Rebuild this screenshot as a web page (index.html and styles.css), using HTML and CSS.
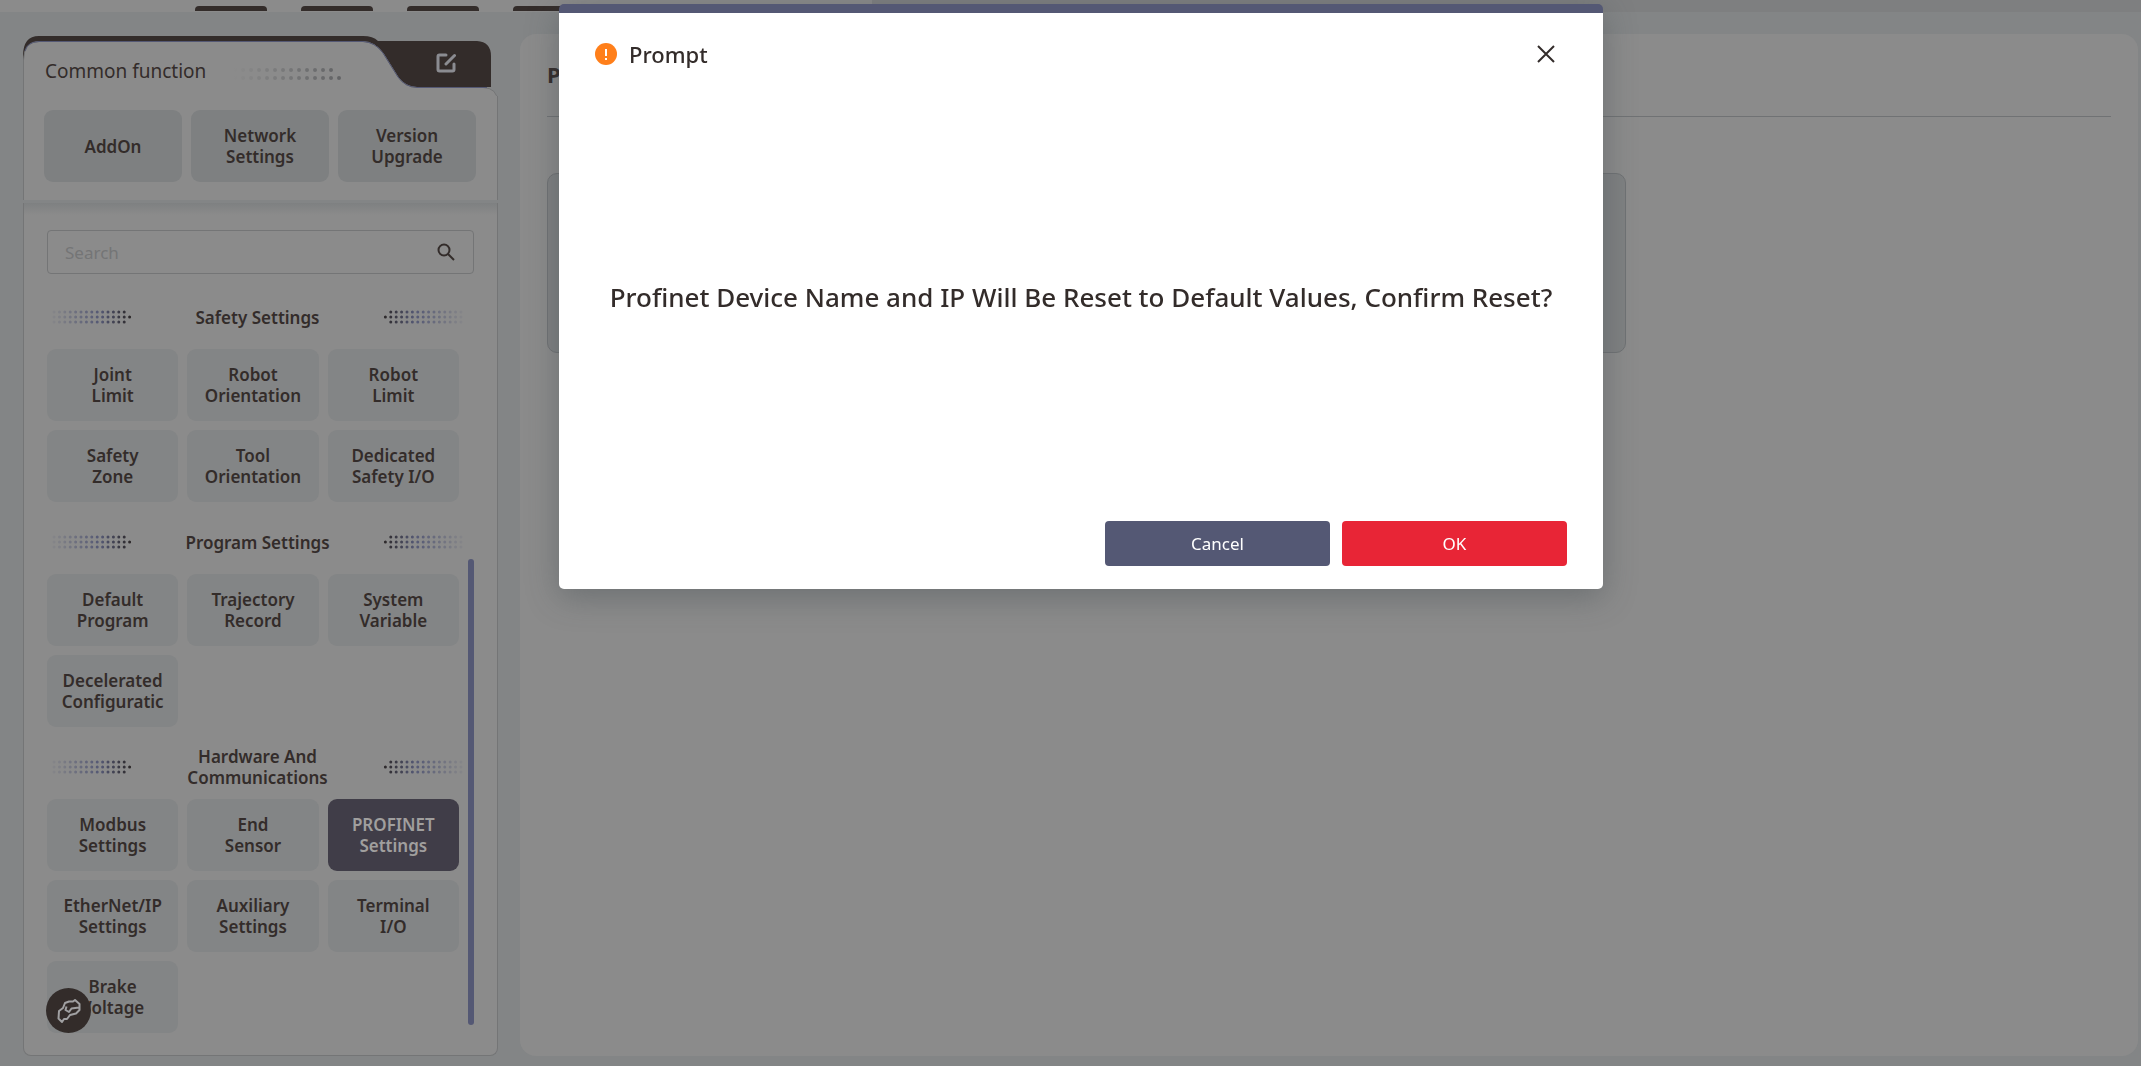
FILE: index.html
```html
<!doctype html>
<html lang="en">
  <head>
    <meta charset="utf-8">
    <meta name="viewport" content="width=device-width, initial-scale=1">
    <title>PROFINET Settings</title>
    <link rel="stylesheet" href="styles.css">
  </head>
  <body>
    <div class="topbar">
      <div class="topbar-tabs"><i></i><i></i><i></i><i></i></div>
      <div class="topbar-rest"></div>
    </div>

    <div class="layout">
      <aside class="sidebar">
        <section class="common">
          <svg class="folder" viewBox="0 0 475 60" aria-hidden="true">
            <path fill="#332c2a" d="M0 20Q0 0 16 0H340Q350 0 355 5H454Q468 6 468 20V51H355L0 26Z"/>
            <path fill="#8b8b8b" stroke="#747576" d="M.5 60V24Q1 5.500 16 5.500H340Q352 6 360 17L375 41Q382 51 394 51.500H460Q474.500 52 474.500 66"/>
            <path fill="none" stroke="#545874" d="M2 15Q4 6 16 5.500H340Q352 6 360 17L375 41Q382 51 394 51.500H464"/>
          </svg>
          <div class="common-head">
            <h2>Common function</h2>
            <svg class="trail" viewBox="0 0 112 14" aria-hidden="true">
              <defs>
                <linearGradient id="fade-grey" gradientUnits="userSpaceOnUse" x1="0" x2="112">
                  <stop offset="0" stop-color="#616264" stop-opacity="0"/>
                  <stop offset="1" stop-color="#616264"/>
                </linearGradient>
              </defs>
              <path d="M2 3H104M2 11H111" stroke="url(#fade-grey)"/>
            </svg>
            <button class="edit" type="button" aria-label="Edit">
              <svg viewBox="0 0 20 20"><path d="M10 2H3.500Q2 2 2 3.500V16.500Q2 18 3.500 18H16.500Q18 18 18 16.500V11M10 11L18.500 2.500"/></svg>
            </button>
          </div>
          <div class="grid common-grid">
            <button type="button">AddOn</button>
            <button type="button">Network<br>Settings</button>
            <button type="button">Version<br>Upgrade</button>
          </div>
        </section>

        <section class="functions">
          <label class="search">
            <input type="text" placeholder="Search" aria-label="Search">
            <svg viewBox="0 0 18 18" aria-hidden="true"><circle cx="7" cy="7" r="5.500"/><path d="M11 11L17 17"/></svg>
          </label>

          <div class="scroller">
            <div class="groups">
              <h3><svg class="dots"><use href="#dots"/></svg><span>Safety Settings</span><svg class="dots flip"><use href="#dots"/></svg></h3>
              <div class="grid">
                <button type="button">Joint<br>Limit</button>
                <button type="button">Robot<br>Orientation</button>
                <button type="button">Robot<br>Limit</button>
                <button type="button">Safety<br>Zone</button>
                <button type="button">Tool<br>Orientation</button>
                <button type="button">Dedicated<br>Safety I/O</button>
              </div>

              <h3><svg class="dots"><use href="#dots"/></svg><span>Program Settings</span><svg class="dots flip"><use href="#dots"/></svg></h3>
              <div class="grid">
                <button type="button">Default<br>Program</button>
                <button type="button">Trajectory<br>Record</button>
                <button type="button">System<br>Variable</button>
                <button type="button">Decelerated<br>Configuratic</button>
              </div>

              <h3><svg class="dots"><use href="#dots"/></svg><span>Hardware And<br>Communications</span><svg class="dots flip"><use href="#dots"/></svg></h3>
              <div class="grid">
                <button type="button">Modbus<br>Settings</button>
                <button type="button">End<br>Sensor</button>
                <button type="button" class="active">PROFINET<br>Settings</button>
                <button type="button">EtherNet/IP<br>Settings</button>
                <button type="button">Auxiliary<br>Settings</button>
                <button type="button">Terminal<br>I/O</button>
                <button type="button">Brake<br>Voltage</button>
              </div>
            </div>
            <div class="track"><div class="thumb"></div></div>
          </div>
        </section>
      </aside>

      <main class="content">
        <h1>P</h1>
        <div class="card"></div>
      </main>
    </div>

    <button class="robot" type="button" aria-label="Robot">
      <svg viewBox="0 0 24 24"><path d="M5 23L1.500 19.500L2 12L6 9L8 4L12 2.500H16L18 1L22.500 5V11L19 14.500L13 16L10 20H7ZM9.500 7.500L8.500 11L12 13L14.500 9.500L22 8.500"/></svg>
    </button>

    <div class="overlay">
      <div class="modal" role="dialog" aria-modal="true" aria-labelledby="modal-title">
        <header>
          <svg class="warn" viewBox="0 0 22 22" aria-hidden="true"><circle cx="11" cy="11" r="11" fill="#ff7f1a"/><path d="M11 6V13M11 15V17" stroke="#fff"/></svg>
          <h2 id="modal-title">Prompt</h2>
          <button class="close" type="button" aria-label="Close">
            <svg viewBox="0 0 18 18"><path d="M1 1L17 17M17 1L1 17"/></svg>
          </button>
        </header>
        <p>Profinet Device Name and IP Will Be Reset to Default Values, Confirm Reset?</p>
        <footer>
          <button type="button">Cancel</button>
          <button type="button" class="ok">OK</button>
        </footer>
      </div>
    </div>

    <!-- dotted arrow, shared by the group titles -->
    <svg class="defs" aria-hidden="true">
      <defs>
        <linearGradient id="fade" gradientUnits="userSpaceOnUse" x1="0" x2="80">
          <stop offset="0" stop-color="#545874" stop-opacity=".1"/>
          <stop offset=".6" stop-color="#545874"/>
          <stop offset="1" stop-color="#2a2626"/>
        </linearGradient>
      </defs>
      <symbol id="dots" viewBox="0 0 80 14">
        <path d="M2 2H73M2 7H79M2 12H73" stroke="url(#fade)" stroke-width="3" stroke-linecap="round" stroke-dasharray="0 5.400" fill="none"/>
      </symbol>
    </svg>
  </body>
</html>
```
FILE: styles.css
```css
* {
  box-sizing: border-box;
}

html, body {
  height: 100%;
}

body {
  margin: 0;
  display: flex;
  flex-direction: column;
  overflow: hidden;
  background: #838586;
  color: #332c2a;
  font-family: "Noto Sans", "Open Sans", sans-serif;
  font-size: 17px;
  line-height: 21px;
}

h1, h2, h3, p {
  margin: 0;
}

button {
  border: 0;
  padding: 0;
  font: inherit;
  color: inherit;
  cursor: pointer;
}

.defs {
  position: absolute;
  width: 0;
  height: 0;
}

/* top bar */
.topbar {
  display: flex;
  flex: none;
  height: 12px;
  background: #8b8b8b;
}

.topbar-tabs {
  display: flex;
  align-items: flex-end;
  gap: 34px;
  padding: 0 287px 1px 195px;
}

.topbar-tabs i {
  width: 72px;
  height: 5px;
  border-radius: 4px 4px 0 0;
  background: #332c2a;
}

.topbar-rest {
  flex: 1;
  background: #7e7f80;
}

.layout {
  flex: 1;
  min-height: 0;
  display: flex;
  gap: 22px;
  padding: 22px 3px 10px 23px;
}

/* sidebar */
.sidebar {
  flex: none;
  width: 475px;
  display: flex;
  flex-direction: column;
  padding-top: 2px;
}

.common {
  position: relative;
  height: 164px;
}

.common::before {
  content: "";
  position: absolute;
  inset: 60px 0 0;
  background: #8b8b8b;
  border: solid #747576;
  border-width: 0 1px;
}

.folder {
  position: absolute;
  top: 0;
  left: 0;
  width: 100%;
}

.common-head {
  position: relative;
  display: flex;
  align-items: center;
  height: 74px;
  padding: 0 42px 4px 22px;
}

.common-head h2 {
  font-size: 19px;
  font-weight: 400;
}

.trail {
  width: 112px;
  height: 14px;
  margin: 6px 0 0 27px;
}

.trail path {
  fill: none;
  stroke-width: 4;
  stroke-linecap: round;
  stroke-dasharray: 0 8;
}

.edit {
  display: flex;
  margin: 0 0 16px auto;
  background: none;
}

.edit svg {
  width: 20px;
  height: 20px;
  fill: none;
  stroke: #8b8c91;
  stroke-width: 3;
  stroke-linecap: round;
}

.grid {
  display: grid;
  grid-template-columns: repeat(3, 1fr);
  gap: 9px;
}

.grid button {
  height: 72px;
  border-radius: 9px;
  background: #838586;
  font-weight: 600;
}

.grid .active {
  background: #403d48;
  color: #a09f9e;
}

.common-grid {
  position: relative;
  padding: 0 22px 0 21px;
}

.common-grid button {
  background: #7e8081;
}

.functions {
  flex: 1;
  min-height: 0;
  display: flex;
  flex-direction: column;
  margin-top: 3px;
  padding: 27px 23px 23px;
  background: linear-gradient(#7e8081, #8b8b8b 12px);
  border: solid #747576;
  border-width: 0 1px 1px;
  border-radius: 0 0 8px 8px;
}

.search {
  display: flex;
  align-items: center;
  height: 44px;
  margin-bottom: 12px;
  padding: 0 18px 0 17px;
  border: 1px solid #747576;
  border-radius: 4px;
}

.search input {
  flex: 1;
  min-width: 0;
  padding: 0;
  border: 0;
  outline: 0;
  background: none;
  font: inherit;
  color: inherit;
}

.search input::placeholder {
  color: #747576;
  opacity: 1;
}

.search svg {
  width: 18px;
  height: 18px;
  fill: none;
  stroke: #332c2a;
  stroke-width: 2;
}

.scroller {
  flex: 1;
  min-height: 0;
  display: flex;
  gap: 9px;
}

.groups {
  flex: 1;
}

.groups h3 {
  display: flex;
  align-items: center;
  justify-content: space-between;
  height: 62px;
  margin: 0 -4px 1px 5px;
  font-size: 17px;
  font-weight: 600;
  text-align: center;
}

.groups .grid + h3 {
  margin-top: 9px;
}

.dots {
  flex: none;
  width: 80px;
  height: 14px;
}

.flip {
  transform: scaleX(-1);
}

.track {
  display: flex;
  flex-direction: column;
  justify-content: flex-end;
  width: 6px;
  padding-bottom: 7px;
}

.thumb {
  height: 63%;
  border-radius: 3px;
  background: #545874;
}

/* page content behind the dialog */
.content {
  flex: 1;
  padding: 0 27px;
  border-radius: 16px;
  background: #8b8b8b;
}

.content h1 {
  height: 83px;
  border-bottom: 1px solid #707274;
  font-size: 22px;
  font-weight: 700;
  line-height: 80px;
}

.card {
  width: 69%;
  height: 180px;
  margin-top: 56px;
  border: 1px solid #707274;
  border-radius: 10px;
  background: #7f8182;
}

.robot {
  position: fixed;
  left: 46px;
  bottom: 33px;
  display: flex;
  align-items: center;
  justify-content: center;
  width: 45px;
  height: 45px;
  border-radius: 50%;
  background: #332c2a;
}

.robot svg {
  width: 24px;
  height: 24px;
  fill: none;
  stroke: #a0a0a2;
  stroke-width: 2;
  stroke-linejoin: round;
}

/* dialog */
.overlay {
  position: fixed;
  inset: 0;
  display: flex;
  align-items: flex-start;
  justify-content: center;
  padding: 4px 0 0 21px;
}

.modal {
  display: flex;
  flex-direction: column;
  width: 1044px;
  height: 585px;
  padding: 0 36px 23px;
  border-top: 9px solid #545874;
  border-radius: 5px;
  background: #fff;
  box-shadow: 0 8px 32px rgba(60, 70, 75, .4);
}

.modal header {
  display: flex;
  align-items: center;
  height: 81px;
}

.warn {
  width: 22px;
  height: 22px;
}

.warn path {
  stroke-width: 2;
}

.modal h2 {
  margin-left: 12px;
  font-size: 22px;
  font-weight: 500;
  line-height: 28px;
}

.close {
  display: flex;
  margin: 0 12px 0 auto;
  background: none;
}

.close svg {
  width: 18px;
  height: 18px;
  fill: none;
  stroke: #332c2a;
  stroke-width: 2;
}

.modal p {
  flex: 1;
  padding-top: 185px;
  font-size: 26px;
  font-weight: 500;
  line-height: 36px;
  text-align: center;
}

.modal footer {
  display: flex;
  justify-content: flex-end;
  gap: 12px;
}

.modal footer button {
  width: 225px;
  height: 45px;
  border-radius: 4px;
  background: #545874;
  color: #fff;
}

.modal footer .ok {
  background: #e82536;
}
```
